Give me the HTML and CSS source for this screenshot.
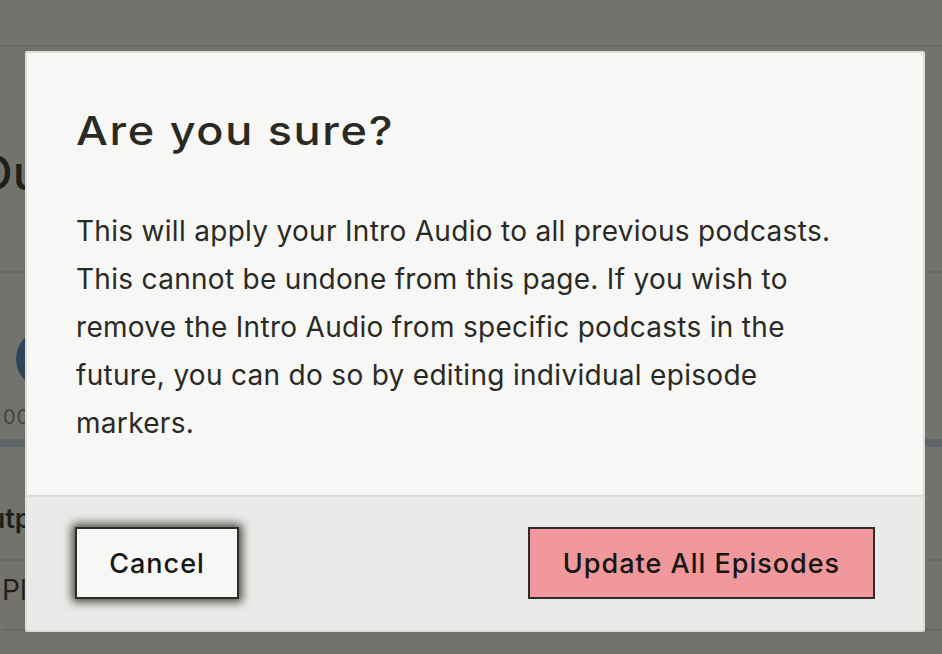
FILE: index.html
```html
<!DOCTYPE html>
<html lang="en">
<head>
<meta charset="utf-8">
<title>Are you sure?</title>
<link rel="stylesheet" href="styles.css">
</head>
<body>
<div class="page">
  <div class="topbar"></div>
  <div class="heading">Our</div>
  <div class="divider"></div>
  <div class="player">
    <div class="avatar"></div>
    <div class="time">00:00</div>
  </div>
  <div class="progress"></div>
  <div class="section">Output</div>
  <div class="row">Play</div>
</div>
<div class="overlay"></div>
<div class="modal" role="dialog" aria-modal="true">
  <div class="modal-body">
    <h1 class="modal-title">Are you sure?</h1>
    <p class="modal-text">This will apply your Intro Audio to all previous podcasts. This cannot be undone from this page. If you wish to remove the Intro Audio from specific podcasts in the future, you can do so by editing individual episode markers.</p>
  </div>
  <div class="modal-footer">
    <button class="btn btn-cancel">Cancel</button>
    <button class="btn btn-primary">Update All Episodes</button>
  </div>
</div>
</body>
</html>
```
FILE: styles.css
```css
html, body {
  margin: 0;
  padding: 0;
  height: 100%;
  overflow: hidden;
}
body {
  background: #f7f7f5;
  font-family: Inter, "Liberation Sans", sans-serif;
  color: #1e1e1c;
}
.page {
  margin-left: -24px;
  width: 1000px;
}
.topbar {
  height: 45px;
  border-bottom: 2px solid #e6e6e3;
}
.heading {
  margin-top: 96px;
  height: 80px;
  font-size: 48px;
  font-weight: 500;
  line-height: 60px;
}
.divider {
  margin-top: 48px;
  border-bottom: 2px solid #e2e2df;
}
.player {
  box-sizing: border-box;
  height: 166px;
  padding-top: 56px;
  padding-left: 40px;
}
.avatar {
  width: 60px;
  height: 60px;
  border-radius: 50%;
  background: #3f82b8;
}
.time {
  font-size: 20px;
  line-height: 24px;
  color: #777;
  margin-top: 16px;
  margin-left: -13px;
  letter-spacing: 1px;
}
.progress {
  height: 8px;
  background: #bfd3df;
}
.section {
  box-sizing: border-box;
  height: 114px;
  padding-top: 57px;
  font-size: 27px;
  line-height: 30px;
  font-weight: 600;
  border-bottom: 2px solid #dadad6;
  margin-left: -8px;
}
.row {
  box-sizing: border-box;
  margin-left: 26px;
  height: 70px;
  padding-top: 12px;
  font-size: 28px;
  line-height: 34px;
  border-bottom: 2px solid #dadad6;
}
.overlay {
  position: fixed;
  inset: 0;
  background: rgba(34, 34, 28, 0.62);
}
.modal {
  position: fixed;
  left: 25px;
  top: 51px;
  width: 896px;
  border: 2px solid #dcdcd9;
  border-radius: 2px;
  background: #f7f7f5;
  color: #2a2a25;
}
.modal-body {
  padding: 54px 48px 48px 49px;
}
.modal-title {
  display: inline-block;
  margin: 0 0 52px;
  font-size: 40px;
  line-height: 48px;
  font-weight: 500;
  letter-spacing: 1.5px;
  color: #2a2a25;
  transform: scaleX(1.125);
  transform-origin: left center;
}
.modal-text {
  margin: 0;
  font-size: 28px;
  line-height: 48px;
  letter-spacing: 0.3px;
  color: #2a2a25;
  max-width: 790px;
}
.modal-footer {
  display: flex;
  justify-content: space-between;
  align-items: center;
  padding: 30px 48px 31px 48px;
  background: #eaeae8;
  border-top: 2px solid #dcdcd9;
}
.btn {
  height: 72px;
  border: 2px solid #2d2d28;
  border-radius: 0;
  font-family: Inter, "Liberation Sans", sans-serif;
  font-size: 27px;
  font-weight: 500;
  letter-spacing: 1px;
  color: #161613;
  padding: 0;
}
.btn-cancel {
  width: 164px;
  background: #f7f7f5;
  box-shadow: 0 0 9px 3px rgba(20, 20, 16, 0.78);
}
.btn-primary {
  width: 347px;
  background: #f0989b;
}
```
